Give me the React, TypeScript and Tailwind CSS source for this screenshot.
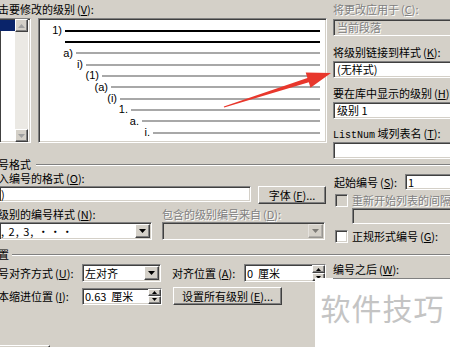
import React from "react";

const sunken =
  "border border-t-[#808080] border-l-[#808080] border-r-white border-b-white shadow-[inset_1px_1px_0_#404040,inset_-1px_-1px_0_#d4d0c8]";
const raised =
  "border border-t-white border-l-white border-r-[#404040] border-b-[#404040] shadow-[inset_-1px_-1px_0_#808080]";
const dim = "text-[#808080] [text-shadow:1px_1px_0_#fff]";

function Lbl({ text, k, dots, className = "" }: { text: string; k: string; dots?: boolean; className?: string }) {
  return (
    <span className={"whitespace-nowrap " + className}>
      {text}
      <span className="ml-[2px]">(</span>
      <u>{k}</u>){dots ? "..." : ":"}
    </span>
  );
}

function Tri() {
  return (
    <svg width="7" height="4" viewBox="0 0 7 4">
      <path d="M0 0h7L3.5 4z" fill="#000" />
    </svg>
  );
}

function DropBtn({ off }: { off?: boolean }) {
  return (
    <div className={"flex h-[14px] w-[15px] items-center justify-center bg-[#d4d0c8] " + raised + (off ? " opacity-40" : "")}>
      <Tri />
    </div>
  );
}

function Spin() {
  return (
    <div className="flex h-full w-[13px] flex-col">
      <div className={"flex flex-1 items-center justify-center bg-[#d4d0c8] " + raised}>
        <svg width="5" height="3" viewBox="0 0 5 3"><path d="M2.5 0L5 3H0z" fill="#000" /></svg>
      </div>
      <div className={"flex flex-1 items-center justify-center bg-[#d4d0c8] " + raised}>
        <svg width="5" height="3" viewBox="0 0 5 3"><path d="M0 0h5L2.5 3z" fill="#000" /></svg>
      </div>
    </div>
  );
}

function Check({ off }: { off?: boolean }) {
  return <div className={"h-[13px] w-[13px] shrink-0 " + sunken + (off ? " bg-[#d4d0c8]" : " bg-white")} />;
}

const rows = [
  { box: "w-[26px]", label: "1)", line: "h-[2px] bg-black" },
  { box: "w-[26px]", label: "", line: "h-[2px] bg-black" },
  { box: "w-[37px]", label: "a)", line: "h-[2px] bg-[#a8a8a8]" },
  { box: "w-[47px]", label: "i)", line: "h-[2px] bg-[#a8a8a8]" },
  { box: "w-[63px]", label: "(1)", line: "h-[2px] bg-[#a8a8a8]" },
  { box: "w-[72px]", label: "(a)", line: "h-[2px] bg-[#a8a8a8]" },
  { box: "w-[81px]", label: "(i)", line: "h-[2px] bg-[#a8a8a8]" },
  { box: "w-[92px]", label: "1.", line: "h-[2px] bg-[#a8a8a8]" },
  { box: "w-[103px]", label: "a.", line: "h-[2px] bg-[#a8a8a8]" },
  { box: "w-[114px]", label: "i.", line: "h-[2px] bg-[#a8a8a8]" },
];

function Etched() {
  return <div className="h-[2px] flex-1 border-t border-t-[#808080] border-b border-b-white" />;
}

export default function App() {
  return (
    <div className="relative h-[347px] w-[450px] overflow-hidden bg-[#d4d0c8] font-['Noto_Sans_CJK_SC',sans-serif] text-[11px] text-black">
      {/* top part */}
      <div className="flex h-[158px] items-start">
        <div className="w-[327px] shrink-0">
          <div className="-ml-[2px] h-[18px] leading-[18px]">
            <Lbl text="击要修改的级别" k="V" />
          </div>
          <div className="flex h-[125px]">
            <div className={"flex w-[31px] bg-white " + sunken + " border-l-0"}>
              <div className="w-[15px] pt-[1px]">
                <div className="h-[11px] bg-[#0a246a]" />
              </div>
              <div className="flex w-[13px] flex-col justify-between bg-[#ebe9e4]">
                <div className={"flex h-[13px] items-center justify-center bg-[#d4d0c8] " + raised}>
                  <svg width="7" height="4" viewBox="0 0 7 4"><path d="M3.5 0L7 4H0z" fill="#a0a0a0" /></svg>
                </div>
                <div className={"flex h-[13px] items-center justify-center bg-[#d4d0c8] " + raised}>
                  <svg width="7" height="4" viewBox="0 0 7 4"><path d="M0 0h7L3.5 4z" fill="#a0a0a0" /></svg>
                </div>
              </div>
            </div>
            <div className={"ml-[7px] flex-1 bg-white pt-[6px] " + sunken}>
              {rows.map((r, i) => (
                <div key={i} className="flex h-[11.33px] items-center">
                  <span className={"shrink-0 pr-[3px] text-right font-['Liberation_Sans',sans-serif] text-[11px] leading-none " + r.box}>
                    {r.label}
                  </span>
                  <div className={"mr-[6px] flex-1 " + r.line} />
                </div>
              ))}
            </div>
          </div>
        </div>

        <div className="ml-[6px] w-[140px] shrink-0">
          <div className={"h-[18px] leading-[18px] " + dim}>
            <Lbl text="将更改应用于" k="C" />
          </div>
          <div className={"mt-[1px] h-[17px] pl-[3px] leading-[15px] " + sunken + " " + dim}>当前段落</div>
          <div className="mt-[7px] h-[18px] leading-[18px]">
            <Lbl text="将级别链接到样式" k="K" />
          </div>
          <div className={"h-[17px] bg-white pl-[3px] leading-[15px] " + sunken}>(无样式)</div>
          <div className="mt-[6px] h-[18px] leading-[18px]">
            <Lbl text="要在库中显示的级别" k="H" />
          </div>
          <div className={"h-[17px] bg-white pl-[3px] leading-[15px] " + sunken}>级别 1</div>
          <div className="mt-[5px] h-[18px] leading-[18px]">
            <span className="font-['Liberation_Mono',monospace] text-[10px]">ListNum</span> <Lbl text="域列表名" k="T" />
          </div>
          <div className={"h-[17px] bg-white " + sunken} />
        </div>
      </div>

      {/* number format group */}
      <div className="flex h-[13px] items-center gap-[5px] leading-[13px]">
        <span className="-ml-[2px]">号格式</span>
        <Etched />
      </div>
      <div className="flex items-start">
        <div className="w-[327px] shrink-0">
          <div className="-ml-[2px] h-[14px] leading-[14px]">
            <Lbl text="入编号的格式" k="O" />
          </div>
          <div className="mt-[1px] flex items-start">
            <div className={"h-[16px] w-[251px] bg-white pl-[1px] leading-[14px] " + sunken + " border-l-0"}>)</div>
            <div className={"ml-[7px] flex h-[18px] w-[68px] items-center justify-center " + raised}>
              <Lbl text="字体" k="F" dots />
            </div>
          </div>
          <div className="mt-[3px] flex h-[14px] leading-[14px]">
            <div className="-ml-[2px] w-[164px]">
              <Lbl text="级别的编号样式" k="N" />
            </div>
            <div className={dim}>
              <Lbl text="包含的级别编号来自" k="D" />
            </div>
          </div>
          <div className="mt-[1px] flex">
            <div className={"flex h-[18px] w-[152px] items-center justify-between bg-white pr-[1px] " + sunken + " border-l-0"}>
              <span className="pl-[1px] tracking-[1px]">, 2, 3, ···</span>
              <DropBtn />
            </div>
            <div className={"ml-[10px] flex h-[18px] w-[163px] items-center justify-end pr-[1px] " + sunken}>
              <DropBtn off />
            </div>
          </div>
        </div>

        <div className="ml-[6px] w-[117px] shrink-0">
          <div className="mt-[2px] flex h-[18px] items-center">
            <span className="w-[72px] shrink-0 pl-[1px]">
              <Lbl text="起始编号" k="S" />
            </span>
            <div className={"flex h-[16px] w-[60px] shrink-0 items-stretch bg-white " + sunken}>
              <span className="flex-1 pl-[2px] leading-[14px]">1</span>
              <Spin />
            </div>
          </div>
          <div className="mt-[2px] flex h-[14px] items-center gap-[4px] pl-[2px]">
            <Check off />
            <span className={dim}>
              <Lbl text="重新开始列表的间隔" k="R" />
            </span>
          </div>
          <div className={"ml-[19px] mt-[1px] h-[16px] w-[120px] " + sunken} />
          <div className="mt-[5px] flex h-[14px] items-center gap-[4px] pl-[2px]">
            <Check />
            <Lbl text="正规形式编号" k="G" />
          </div>
        </div>
      </div>

      {/* position group */}
      <div className="mt-[5px] flex h-[13px] items-center gap-[3px] leading-[13px]">
        <span className="-ml-[2px]">置</span>
        <Etched />
      </div>
      <div className="mt-[3px] flex items-start">
        <div className="w-[327px] shrink-0">
          <div className="flex h-[18px] items-center">
            <span className="-ml-[2px] w-[84px] shrink-0">
              <Lbl text="号对齐方式" k="U" />
            </span>
            <div className={"flex h-[18px] w-[79px] items-center justify-between bg-white pr-[1px] " + sunken}>
              <span className="pl-[2px]">左对齐</span>
              <DropBtn />
            </div>
            <span className="ml-[11px] w-[72px] shrink-0">
              <Lbl text="对齐位置" k="A" />
            </span>
            <div className={"flex h-[18px] w-[82px] items-stretch bg-white " + sunken}>
              <span className="flex-1 pl-[2px] leading-[16px]">0&nbsp;&nbsp;厘米</span>
              <Spin />
            </div>
          </div>
          <div className="mt-[5px] flex h-[18px] items-center">
            <span className="-ml-[2px] w-[84px] shrink-0">
              <Lbl text="本缩进位置" k="I" />
            </span>
            <div className={"flex h-[17px] w-[80px] items-stretch bg-white " + sunken}>
              <span className="flex-1 pl-[2px] leading-[15px]">0.63&nbsp;&nbsp;厘米</span>
              <Spin />
            </div>
            <div className={"ml-[11px] flex h-[18px] w-[109px] items-center justify-center " + raised}>
              <Lbl text="设置所有级别" k="E" dots />
            </div>
          </div>
          <div className={"-ml-[12px] mt-[40px] h-[24px] w-[62px] pt-[2px] text-center " + raised}>
            <Lbl text="更少" k="L" dots={false} className="[&>u]:no-underline" />
          </div>
        </div>
        <div className="ml-[6px] w-[117px] shrink-0">
          <div className="-mt-[2px] h-[14px] leading-[14px]">
            <Lbl text="编号之后" k="W" />
          </div>
        </div>
      </div>

      {/* watermark overlay */}
      <div className="absolute left-[315px] top-[278px] flex h-[69px] w-[135px] items-start justify-center bg-white pt-[10px]">
        <div className="absolute left-[18px] right-0 top-0 h-[1px] bg-[#808080]" />
        <span className="text-[30px] leading-[38px] tracking-[1px] text-[#c4c4c4]">软件技巧</span>
      </div>

      {/* red arrow */}
      <svg className="pointer-events-none absolute left-0 top-0" width="450" height="347" viewBox="0 0 450 347">
        <polygon
          points="223.8,106.5 307.4,78 305.7,72.5 331,73 310.5,87.8 308.8,82.3 224.2,107.5"
          fill="#e8372c"
        />
      </svg>
    </div>
  );
}
